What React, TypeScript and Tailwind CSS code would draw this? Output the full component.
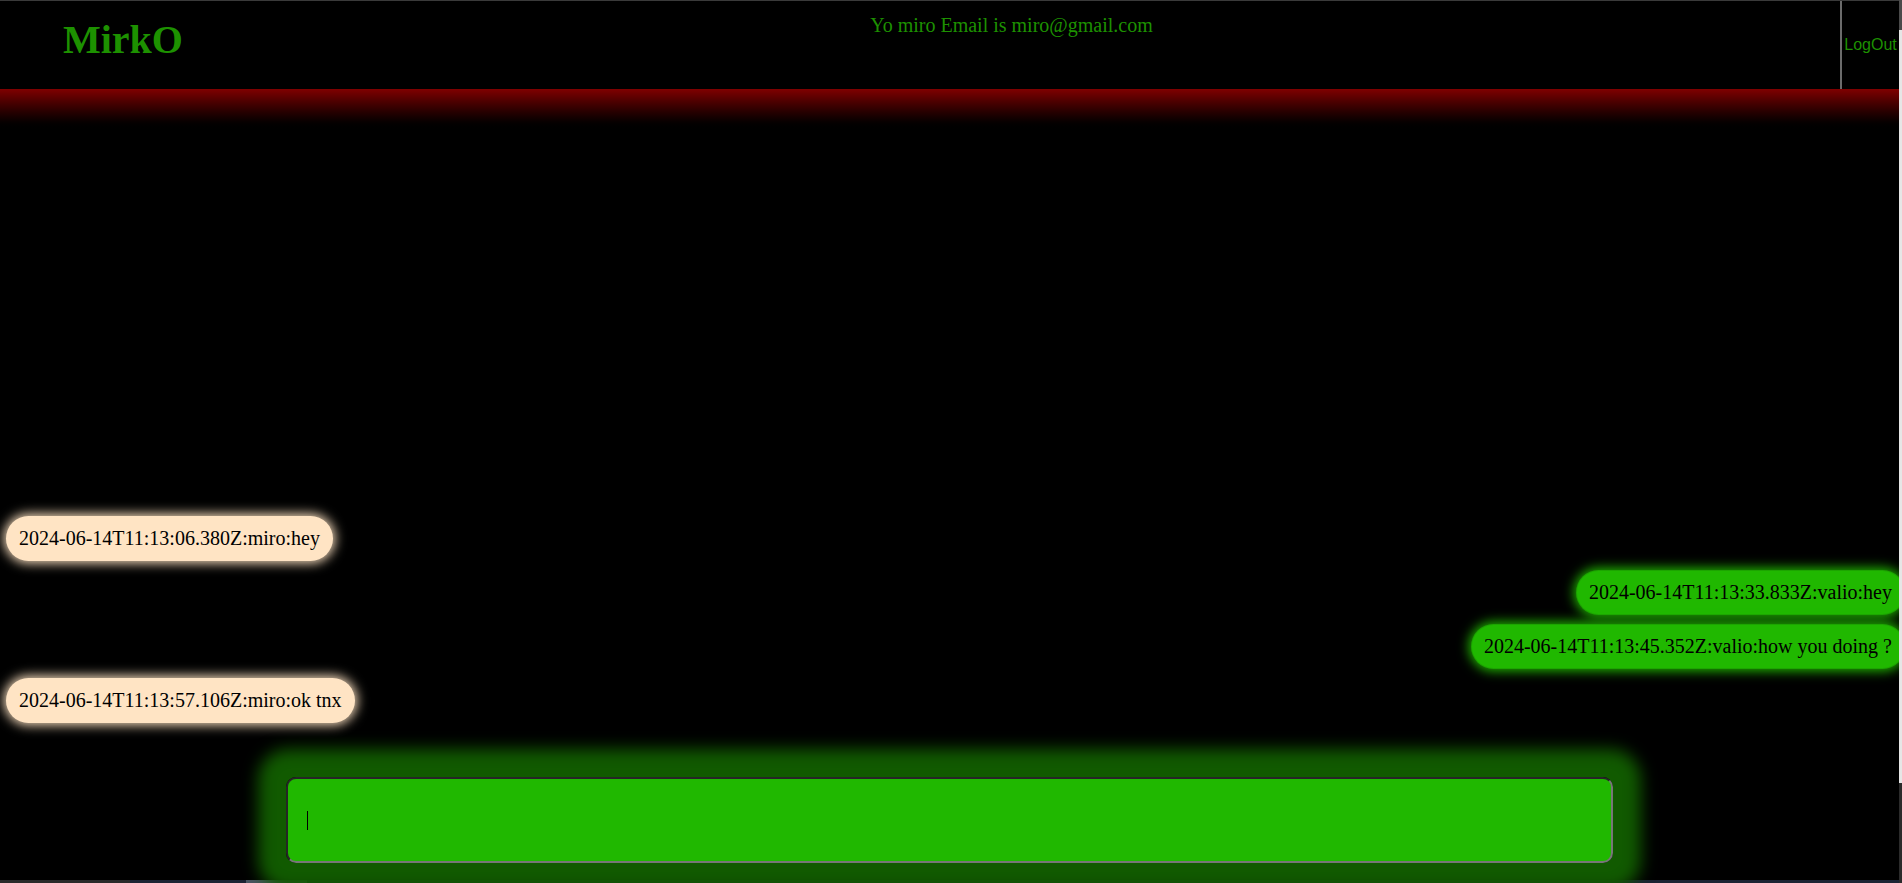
import React from "react";

type Msg = { text: string; mine: boolean };

const messages: Msg[] = [
  { text: "2024-06-14T11:13:06.380Z:miro:hey", mine: false },
  { text: "2024-06-14T11:13:33.833Z:valio:hey", mine: true },
  { text: "2024-06-14T11:13:45.352Z:valio:how you doing ?", mine: true },
  { text: "2024-06-14T11:13:57.106Z:miro:ok tnx", mine: false },
];

export default function App() {
  return (
    <div className="flex h-[883px] w-full overflow-hidden bg-black font-['Liberation_Serif',serif]">
      <main className="flex min-w-0 flex-1 flex-col">
        <header className="flex h-[89px] shrink-0 border-t border-[#3a3a3a]">
          <h1 className="pl-[63px] pt-[15px] text-[40px] font-bold leading-[normal] text-[#1d9100]">
            MirkO
          </h1>
          <div className="flex-1 pt-[13px] text-center text-[20px] leading-[normal] text-[#1d9100]">
            Yo miro Email is miro@gmail.com
          </div>
          <button className="w-[59px] border-l-2 border-[#6b6b6b] bg-black text-center font-['Liberation_Sans',sans-serif] text-[16px] text-[#1d9100]">
            LogOut
          </button>
        </header>
        <div className="h-[42px] shrink-0 bg-linear-to-b from-[#800000] to-black" />
        <section className="flex min-h-0 flex-1 flex-col justify-end gap-[9px]">
          {messages.map((m, i) =>
            m.mine ? (
              <div
                key={i}
                className="mr-[-6px] self-end whitespace-nowrap rounded-full border border-black/10 bg-[#20b800] px-[12px] py-[10px] text-[20px] leading-[23px] text-black shadow-[0_0_12px_2px_#20b800]"
              >
                {m.text}
              </div>
            ) : (
              <div
                key={i}
                className="ml-[6px] self-start whitespace-nowrap rounded-full bg-[#ffe4c4] px-[13px] py-[11px] text-[20px] leading-[23px] text-black shadow-[0_0_12px_2px_#ffe4c4]"
              >
                {m.text}
              </div>
            )
          )}
        </section>
        <div className="flex shrink-0 justify-center pb-[17px] pt-[54px]">
          <div className="relative h-[86px] w-[1327px] rounded-[10px] shadow-[0_0_16px_28px_#115a00]">
            <input
              type="text"
              className="h-full w-full rounded-[10px] border-2 border-b-[#777777] border-l-[#262626] border-r-[#777777] border-t-[#262626] bg-[#20b800] pl-[20px] text-[20px] text-black outline-none"
            />
            <div className="absolute left-[21px] top-[34px] h-[19px] w-px bg-black" />
          </div>
        </div>
        <div className="flex h-[3px] shrink-0 bg-[#1c2434]">
          <div className="w-[130px] bg-[#2a2a2a]" />
          <div className="w-[116px]" />
          <div className="w-[61px] bg-[#4b5563]" />
        </div>
      </main>
      <aside className="flex w-[3px] shrink-0 flex-col">
        <div className="h-[30px] bg-[#4a4a4a]" />
        <div className="h-[753px] bg-[#e6e6e6]" />
        <div className="flex-1 bg-[#2b2b2b]" />
      </aside>
    </div>
  );
}
